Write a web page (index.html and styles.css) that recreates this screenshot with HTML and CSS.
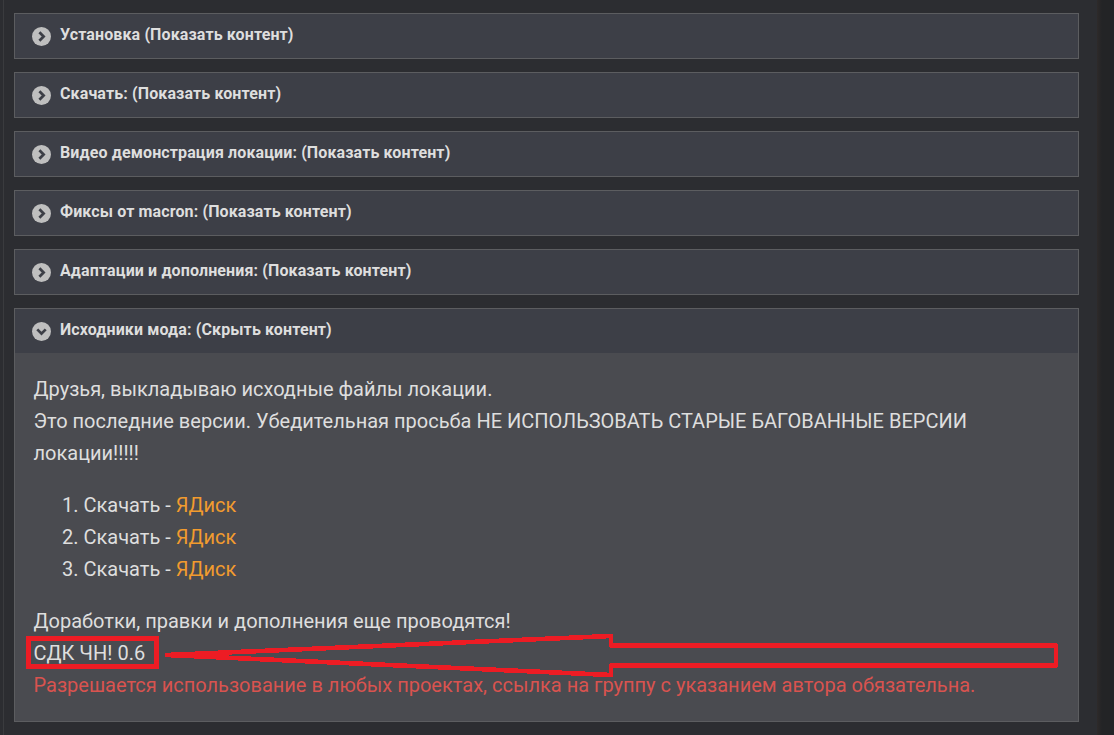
FILE: index.html
```html
<!DOCTYPE html>
<html lang="en">

<head>
    <meta charset="UTF-8">
    <meta name="viewport" content="width=device-width, initial-scale=1.0">
    <title>Исходники мода</title>
    <link rel="stylesheet" href="styles.css">
</head>

<body>
    <div class="page">
        <div class="spoiler">
            <div class="spoiler-head">
                <svg class="toggle" viewBox="0 0 18 18"><circle cx="9" cy="9" r="9"/><path d="M7 5l4 4-4 4"/></svg>
                <span>Установка (Показать контент)</span>
            </div>
        </div>
        <div class="spoiler">
            <div class="spoiler-head">
                <svg class="toggle" viewBox="0 0 18 18"><circle cx="9" cy="9" r="9"/><path d="M7 5l4 4-4 4"/></svg>
                <span>Скачать: (Показать контент)</span>
            </div>
        </div>
        <div class="spoiler">
            <div class="spoiler-head">
                <svg class="toggle" viewBox="0 0 18 18"><circle cx="9" cy="9" r="9"/><path d="M7 5l4 4-4 4"/></svg>
                <span>Видео демонстрация локации: (Показать контент)</span>
            </div>
        </div>
        <div class="spoiler">
            <div class="spoiler-head">
                <svg class="toggle" viewBox="0 0 18 18"><circle cx="9" cy="9" r="9"/><path d="M7 5l4 4-4 4"/></svg>
                <span>Фиксы от macron: (Показать контент)</span>
            </div>
        </div>
        <div class="spoiler">
            <div class="spoiler-head">
                <svg class="toggle" viewBox="0 0 18 18"><circle cx="9" cy="9" r="9"/><path d="M7 5l4 4-4 4"/></svg>
                <span>Адаптации и дополнения: (Показать контент)</span>
            </div>
        </div>
        <div class="spoiler spoiler-open">
            <div class="spoiler-head">
                <svg class="toggle" viewBox="0 0 18 18"><circle cx="9" cy="9" r="9"/><path d="M5 7l4 4 4-4"/></svg>
                <span>Исходники мода: (Скрыть контент)</span>
            </div>
            <div class="spoiler-body">
                <p>Друзья, выкладываю исходные файлы локации.<br>Это последние версии. Убедительная просьба НЕ ИСПОЛЬЗОВАТЬ СТАРЫЕ БАГОВАННЫЕ ВЕРСИИ локации!!!!!</p>
                <ol>
                    <li>Скачать - <a href="#">ЯДиск</a></li>
                    <li>Скачать - <a href="#">ЯДиск</a></li>
                    <li>Скачать - <a href="#">ЯДиск</a></li>
                </ol>
                <p>Доработки, правки и дополнения еще проводятся!<br>СДК ЧН! 0.6<br><span class="warn">Разрешается использование в любых проектах, ссылка на группу с указанием автора обязательна.</span></p>
            </div>
            <!-- red marks drawn on top of the screenshot -->
            <svg class="marks" viewBox="0 0 1065 414" width="1065" height="414">
                <rect x="13.5" y="329.5" width="128" height="28"/>
                <polygon points="152,346 596,327 596,336.5 1041,336.5 1041,356.5 596,356.5 596,366"/>
            </svg>
        </div>
    </div>
</body>

</html>
```

FILE: styles.css
```css
body {
    margin: 0;
    background-color: #2c2d31;
    font-family: Roboto, "Liberation Sans", sans-serif;
    color: #dedede;
}

.page {
    height: 735px;
    box-sizing: border-box;
    padding: 13px 35px 0 14px;
    overflow: hidden;
    background: linear-gradient(to right, #2c2d31 3px, #3a3b3e 3px, #3a3b3e 4px, #2c2d31 4px, #2c2d31 1097px, #2e2a2a 1097px, #232426 1102px);
}

.spoiler {
    border: 1px solid #5c5d60;
    margin-bottom: 13px;
    position: relative;
}

.spoiler-head {
    display: flex;
    align-items: center;
    height: 44px;
    padding-left: 17px;
    background-color: #3d3f47;
    font-size: 16px;
    font-weight: 700;
    letter-spacing: 0.12px;
    color: #dedede;
}

.spoiler-head span {
    margin-left: 9px;
    position: relative;
    top: -2px;
}

.toggle {
    width: 19px;
    height: 19px;
    flex: none;
}

.toggle circle {
    fill: #bfbfbf;
}

.toggle path {
    fill: none;
    stroke: #3d3f47;
    stroke-width: 2.6;
}

.spoiler-body {
    background-color: #4a4b50;
    padding: 20px 18.5px;
    font-size: 20px;
    line-height: 32px;
}

.spoiler-body p {
    margin: 0 0 20px;
}

.spoiler-body p:last-child {
    margin-bottom: 0;
}

.spoiler-body ol {
    margin: 0 0 20px;
    padding-left: 50px;
}

.spoiler-body a {
    color: #f29b2e;
    text-decoration: none;
}

.warn {
    color: #d9534f;
}

.marks {
    position: absolute;
    left: 0;
    top: 0;
    pointer-events: none;
    shape-rendering: crispEdges;
}

.marks rect,
.marks polygon {
    fill: none;
    stroke: #ed1c24;
    stroke-width: 4.6;
    stroke-linejoin: round;
}

.marks rect {
    stroke-width: 5;
    stroke-linejoin: miter;
}
```
